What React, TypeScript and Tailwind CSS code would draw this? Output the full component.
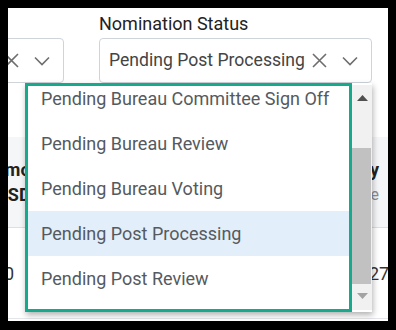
import { ReactNode } from 'react';

const options = [
    'Pending Bureau Committee Sign Off',
    'Pending Bureau Review',
    'Pending Bureau Voting',
    'Pending Post Processing',
    'Pending Post Review',
];

function ClearIcon() {
    return (
        <svg width="17" height="17" viewBox="0 0 17 17" className="shrink-0 text-[#6e6e6e]">
            <path d="M2 2 L15 15 M15 2 L2 15" stroke="currentColor" strokeWidth="1.6" fill="none" />
        </svg>
    );
}

function ChevronIcon() {
    return (
        <svg width="16" height="10" viewBox="0 0 16 10" className="shrink-0 ml-[14px] text-[#6e6e6e]">
            <path d="M1 1.5 L8 8.5 L15 1.5" stroke="currentColor" strokeWidth="1.6" fill="none" />
        </svg>
    );
}

function FilterSelect({ label, value }: { label: string; value: string }) {
    return (
        <div className="w-[273px] shrink-0">
            <div className="h-6 text-[18px] leading-6 text-[#222]">{label}</div>
            <div className="mt-[2px] h-[45px] rounded-[4px] border border-[#cfd4da] flex items-center pl-[9px] pr-[13px]">
                <span className="flex-1 truncate text-[17.6px] text-[#444]">{value}</span>
                <ClearIcon />
                <ChevronIcon />
            </div>
        </div>
    );
}

function Arrow({ up, className }: { up?: boolean; className: string }) {
    return (
        <svg width="11" height="6" viewBox="0 0 11 6" className={className}>
            <path d={up ? 'M0 6 L5.5 0 L11 6 Z' : 'M0 0 L5.5 6 L11 0 Z'} fill="currentColor" />
        </svg>
    );
}

function Cell({ children, className }: { children: ReactNode; className: string }) {
    return <div className={className}>{children}</div>;
}

export default function App() {
    return (
        <div className="w-[396px] h-[330px] bg-black pt-2 pl-2 pr-2 pb-[9px]">
            <div className="relative h-full w-full overflow-hidden bg-white font-['Roboto',sans-serif]">
                {/* filter bar */}
                <div className="flex gap-[35px] -ml-[217px] pt-1">
                    <FilterSelect label="Post" value="All" />
                    <FilterSelect label="Nomination Status" value="Pending Post Processing" />
                </div>

                {/* table header */}
                <div className="mt-[54px] h-[91px] bg-[#f5f6f8] border-b border-[#dcdfe3] flex items-center justify-between">
                    <Cell className="-ml-[15px] font-bold text-[18px] leading-[25px] text-[#222]">
                        <div>Amount</div>
                        <div className="pl-[3px]">USD</div>
                    </Cell>
                    <Cell className="pr-[9px] text-right leading-[25px]">
                        <div className="font-bold text-[18px] text-[#222]">Frequency</div>
                        <div className="text-[16px] text-[#8a8f96]">Exchange Rate</div>
                    </Cell>
                </div>

                {/* table row */}
                <div className="h-[91px] border-b border-[#e3e5e8] flex items-center justify-between text-[18px] text-[#333]">
                    <div className="w-[80px] -ml-[74px] text-right">$2,500</div>
                    <div className="w-[19px] whitespace-nowrap">27/03/2024</div>
                </div>

                {/* open dropdown */}
                <div className="absolute left-[17px] top-[75px] w-[347px] h-[229px] flex bg-white shadow-[1px_3px_6px_rgba(0,0,0,0.3)]">
                    <div className="w-[327px] h-full border-[3px] border-[#17a98b] bg-white overflow-hidden">
                        <div className="-mt-[10px]">
                            {options.map((o) => (
                                <div
                                    key={o}
                                    className={
                                        o === 'Pending Post Processing'
                                            ? 'h-[45px] flex items-center pl-[13px] text-[18px] text-[#555a60] bg-[#e2eefa] whitespace-nowrap'
                                            : 'h-[45px] flex items-center pl-[13px] text-[18px] text-[#555a60] whitespace-nowrap'
                                    }
                                >
                                    {o}
                                </div>
                            ))}
                        </div>
                    </div>
                    <div className="w-[20px] my-[2px] bg-[#f1f1f1] flex flex-col">
                        <div className="h-[25px] flex items-center justify-center">
                            <Arrow up className="text-[#505050]" />
                        </div>
                        <div className="h-[38px]" />
                        <div className="h-[136px] mr-[1px] bg-[#c1c1c1]" />
                        <div className="flex-1" />
                        <div className="h-[25px] pb-[4px] flex items-center justify-center">
                            <Arrow className="text-[#a3a3a3]" />
                        </div>
                    </div>
                </div>
            </div>
        </div>
    );
}
